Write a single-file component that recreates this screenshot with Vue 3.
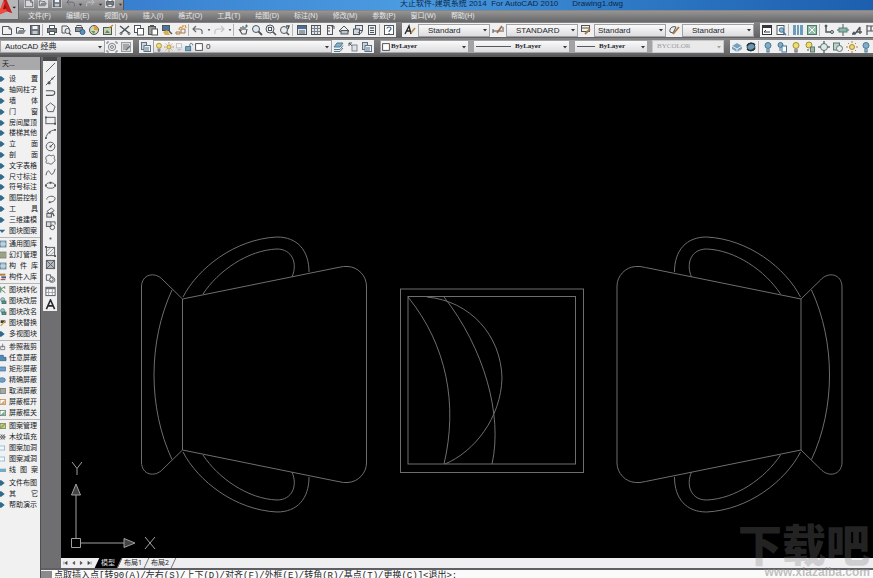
<script setup>
import { ref } from 'vue'

const D = '#50555c'
const B = '#3f7596'
const s = (d, c = D, w = 1) => `<path d="${d}" fill="none" stroke="${c}" stroke-width="${w}"/>`
const f = (d, c = D) => `<path d="${d}" fill="${c}"/>`
const box = (x, y, w, h, fill = 'none', c = D) =>
  `<rect x="${x}" y="${y}" width="${w}" height="${h}" fill="${fill}" stroke="${c}" stroke-width="1"/>`
const dot = (x, y, r, fill = 'none', c = D) =>
  `<circle cx="${x}" cy="${y}" r="${r}" fill="${fill}" stroke="${c}" stroke-width="1"/>`

const icons = {
  new: s('M1.5 2.5H8L10.500 5V10.500H1.500Z') + s('M8 2.500V5H10.500'),
  open: s('M1.500 9.500V3.500H4L5 4.500H8.500V6') + f('M1.500 10L4 6H11L8.500 10Z', '#858a90'),
  save: box(1.5, 1.5, 9, 9, '#6d7681') + f('M3.500 2H8.500V5H3.500Z', '#f4f4f4') + f('M3.500 7H8.500V10H3.500Z', '#c3c9d0'),
  print: box(3.5, 1.5, 5, 3, '#fff') + box(1.5, 4.5, 9, 4, '#7a7f86') + box(3.5, 7.5, 5, 3, '#fff'),
  preview: s('M2 2H7L9 4V5M2 2V9H5') + dot(7.5, 7, 2.5, '#dfe9f2') + s('M9 9L11 11', D, 1.5),
  publish: box(1.5, 3.5, 7, 4, '#8c9299') + box(3, 1.5, 4, 2, '#fff') + dot(8.5, 8, 2.5, '#5d8fbd', '#3c6182'),
  globe: dot(6, 6, 4.5, '#cfd6b4') + f('M6 2V6H10A4 4 0 0 0 6 2Z', '#e29e35') + f('M3 7L6 10L7 7Z', '#5b9b58'),
  sheet: box(1.5, 3.5, 8, 7, '#c6d3b0') + f('M3 9L5 6L8 9Z', '#5b8d55') + s('M7 4L11 1', '#c78b2c', 1.5),
  cut: s('M1 2L10 9M10 2L2 9', D, 1.5) + dot(2, 9.5, 1) + dot(10, 9.5, 1),
  copy: box(1.5, 1.5, 6, 7, '#fff') + box(4.5, 4.5, 6, 6.5, '#fff'),
  paste: box(1.5, 2.5, 7, 8, '#9b9c96') + box(5, 5, 5.5, 6, '#fff') + f('M3 1H7V3H3Z'),
  match: box(1.5, 1.5, 7, 5, '#4e749d') + f('M2 8L6 6L9 11H4Z', '#d7ae49') + s('M8 7L11 10', D, 1.5),
  block: s('M1 8H5V10H1ZM6 5H10V9H6Z', '#a77b45') + s('M4 6C4 3 6 3 8 3M8 3V1M10 1L11 4', '#db8d2f', 1.2),
  undo: s('M4 2L1 5L4 8M1 5H7C10 5 10.500 7 10 10', '#666b72', 1.2),
  redo: s('M8 2L11 5L8 8M11 5H5C2 5 1.500 7 2 10', '#c3c3c5', 1.2),
  down: f('M2 4H10L6 9Z', '#34373b'),
  pan: s('M2 5L5 10H9L10 5M4 7V3M6 6V2M8 6V3', D, 1.2) + s('M8 2H11M9.500 0.500V3.500', B),
  zoom: dot(5, 5, 3.5, '#dfe8ef') + s('M7.500 7.500L11 11', D, 1.8),
  zoomwin: dot(5, 5, 4, '#dfe8ef') + box(3.5, 3.5, 3, 3, '#fff') + s('M8 8L11 11', D, 1.6),
  zoomprev: dot(5, 6, 3.5, '#e6ebef') + s('M7.500 8.500L10 11', D, 1.6) + s('M7 2H10L9 5', D, 1.4),
  props: box(1.5, 1.5, 9, 9, '#dfe7ef') + f('M2 2H10V5H2Z', '#4b6f9a') + s('M3 7H9M3 9H9'),
  grid: box(1.5, 1.5, 9, 9, '#e2e6ea') + s('M4.500 2V10M7.500 2V10M2 4.500H10M2 7.500H10', '#7a828b'),
  palette: box(3.5, 1.5, 5, 9, '#eee') + s('M3.500 4H6M3.500 7H6M7 2H10V5'),
  sheets: s('M1 7L6 2L11 7L6 9Z') + box(3, 6.5, 7, 3.5, '#bec4ca'),
  markup: box(3.5, 1.5, 7, 5, '#e3e6ea') + box(1.5, 5, 6, 5.5, '#cdd7df') + s('M6 8C7 10 10 10 10 7'),
  calc: box(2.5, 1.5, 7, 9, '#eef0f2') + f('M4 3H8V5H4Z', '#7c8792') + s('M4 6.500H8M4 8.500H8'),
  help: box(1.5, 1.5, 9, 9, '#fff') + s('M4 4.500C4 2.500 8 2.500 8 4.500C8 6 6 6 6 8M6 9V10', '#44628a', 1.2),
  astyle: s('M1 10L5 2L7 10M3 7H6', '#25282c', 1.4) + s('M7 9L11 4', '#b58849', 1.6),
  dim: s('M1 9V5M11 8V3M1 7H10') + s('M5 9L10 2', '#a76b41', 1.7),
  tstyle: box(1.5, 1.5, 8, 6, '#f6f2df') + s('M1.500 4H9.500') + s('M5 10L10 5', '#a77948', 1.8),
  ml: s('M2 8C1 3 6 2 8 3L5 9Z', D) + s('M5 10L11 3', '#a77948', 1.8),
  gear: dot(6, 6, 3.7, '#e3e5e7', '#888e95') + dot(6, 6, 1.4, '#fff', '#777d84') + s('M1 1V3M1 1H3M11 1H9M11 1V3M1 11V9M1 11H3M11 11H9M11 11V9', '#777d84'),
  work: box(1.5, 1.5, 9, 9, '#d6d8db', '#9a9ea3') + s('M3 4H9M3 6H8M3 8H6', '#777') + s('M6 9L10 5', '#666', 1.5),
  layer: f('M1 6L4 2H10L7 6Z', '#7fb2cf') + s('M1 6L4 2H10L7 6ZM1 8.500H7L10 4.500M1 10.500H7L10 7', '#52788f'),
  layers: box(1.5, 1.5, 5, 7, '#ccd5dd', '#5d7286') + box(4, 4.5, 6.5, 6, '#edf1f4', '#5d7286') + s('M5 7H9M5 9H9', '#5d7286'),
  bulb: dot(6, 4.5, 3, '#ecdf72', '#a18b32') + s('M5 8V11H7V8', '#667', 1.2),
  bluebulb: dot(6, 4.5, 3, '#82acc8', '#467895') + s('M5 8V11H7V8', '#467895', 1.2),
  sun: dot(6, 6, 2.5, '#f1da6b', '#aa8638') + s('M6 0V2M6 10V12M0 6H2M10 6H12M2 2L3 3M9 9L10 10M10 2L9 3M2 10L3 9', '#aa8638'),
  vp: box(3, 2, 6, 5, '#f5f5f5', '#b8bbc0') + s('M6 8V11M4 9H9', '#b8bbc0'),
  lock: box(2, 5.5, 6, 5, '#77a5bd', '#3e6b83') + s('M7 5V3C7 1 11 1 10.500 4', '#3e6b83'),
  square: box(2, 2, 8, 8, '#fff', '#34373b'),
  prev: s('M2 2L5 2M2 2V5M2 2L5 5') + box(5, 4, 5, 6, '#e0e3e7', '#7c8792'),
  cube: f('M1 5L6 2L11 5V8L6 11L1 8Z', '#79a1bf') + s('M1 5L6 8L11 5M6 8V11', '#e5edf3'),
  refresh: dot(6, 6, 4, '#6f95ae', '#3a5165') + s('M2 5C4 1 9 2 10 4M10 7C8 10 4 10 2 8', '#26313a', 1.5),
  bulbpage: dot(4.5, 4, 2.5, '#82acc8', B) + s('M4 7V10', B) + box(6, 5, 4.5, 6, '#fff', B),
  yellowpage: dot(5, 4, 3, '#ecdf72', '#a18b32') + s('M4 8V10', D) + box(6.5, 6, 4, 5, '#9bb9a0', '#5e7770'),
  sheetkey: box(1.5, 3, 9, 7.500, '#fff', '#33373c') + f('M1 1H11V4H1Z', '#33373c') + s('M3 8H9M3 8L5 6', '#33373c'),
  find: box(2, 1.5, 7, 9, '#fff') + dot(6.5, 6, 2.3, '#8eb5d2', B) + s('M8 8L11 11', B, 1.5),
  cols: f('M1 1H4V11H1ZM5 1H7V11H5ZM8 1H11V11H8Z', '#6c9db9'),
  green: box(1.5, 1.5, 9, 9, '#93bfa9', '#527a6b') + s('M3 3L9 9M9 3L3 9', '#fff'),
  elbow: s('M3 1V8H8', D, 1.4) + dot(9, 8, 1.5, '#ccc') + dot(3, 2, 1, D),
  align: s('M6 0V12M0 6H12') + box(2, 4, 8, 4, '#8eb7a7', '#538272'),
  leader: s('M1 10H4L9 3M9 3V10M6 8H11', D, 1.3) + dot(3, 9, 1, D),
  flag: s('M2 1V11M2 2H10V7H2M6 2V7', D, 1.2),
  wheel: dot(6, 6, 3.5, '#dfe9e4', '#5e7770') + s('M6 0V3M6 9V12M0 6H3M9 6H12', '#5e7770', 1.5),
  page: box(1.5, 2, 6, 7, '#bdd3ca', '#5e7770') + dot(7.500, 7.500, 3, '#e5edea', '#5e7770'),
  line: s('M1 11L11 1'),
  xline: s('M1 11L11 1') + f('M3 7H6V10H3ZM7 3H9V5H7Z'),
  pline: s('M1 3H8C12 3 11 8 8 8H3M1 8H3', D, 1.2),
  polygon: s('M6 1L11 5L9 10.500H3L1 5Z'),
  rect: box(1, 2.5, 10, 7) + f('M0 1.500H2V3.500H0ZM10 8.500H12V10.500H10Z'),
  arc: s('M1 11C2 6 5 3 11 2') + f('M0 10H2V12H0ZM4 4H6V6H4ZM10 1H12V3H10Z'),
  circle: dot(6, 6, 4.7) + s('M6 6L9 3') + f('M5 5H7V7H5Z'),
  cloud: s('M3 2C5 0 6 2 7 2C10 0 11 3 10 5C12 7 10 9 9 9C8 12 5 11 4 10C1 11 0 8 2 7C0 5 1 2 3 2Z'),
  spline: s('M1 9C3 1 5 5 6 7C8 10 10 6 11 2'),
  ellipse: '<ellipse cx="6" cy="6" rx="5" ry="3" fill="none" stroke="#50555c"/>' + f('M0 5H2V7H0ZM10 5H12V7H10ZM5 2H7V4H5Z'),
  earc: s('M2 6C1 2 11 1 11 5C11 8 7 9 5 9') + f('M4 8H6V10H4Z'),
  insert: s('M2 5L7 1L10 4L5 7Z') + box(2, 7, 5, 4, '#d7dadd') + s('M8 6L10 10', D, 1.5),
  make: box(1.500, 2, 5, 5, '#d7dadd') + dot(8, 8, 2.500) + s('M7 2H11V5'),
  point: f('M5 5H7V7H5Z'),
  hatch: box(1.500, 1.500, 9, 9) + s('M2 6L6 2M2 10L10 2M6 10L10 6', '#8a8d92') + f('M0 0H2V2H0ZM10 10H12V12H10Z'),
  gradient: box(1.500, 1.500, 9, 9, '#b5b8bc') + s('M2 2L10 10M10 2L2 10', '#5a5f66'),
  region: s('M1.500 2H6V4C10 4 11 6 10.500 9C8 11 5 10 4 8H1.500Z') + dot(7, 7, 2),
  table: box(1, 1.500, 10, 9, '#fff') + f('M1 1H11V3.500H1Z', '#6d7278') + s('M4 3V10M8 3V10M1 7H11', '#9a9da2'),
  atext: s('M1.500 11L6 1L10.500 11M3 7.500H9', '#26292d', 1.7),
  diamond: f('M-1 2H2L7 6L2 10H-1Z', '#316b8b'),
  tri: f('M-1 4H8L3 9Z', '#316b8b'),
  lib: box(0, 1.500, 9, 9, '#8fb1c6', '#456981') + s('M3 2V10M6 2V10M0 6H9', '#e8eef2'),
  slide: box(0, 1.500, 9, 9, '#b5bda1', '#676d59') + s('M3 2V10M6 2V10', '#676d59'),
  in: f('M0 1H8V4H0Z', '#b58043') + f('M2 5H9V8H2Z', '#4c5c87') + s('M1 10H8', '#973b3b', 1.5),
  conv: s('M1 1V10M1 5L7 1M1 5L8 10M7 1V4', '#50856a', 1.4),
  colr: dot(4, 4, 3, '#9fc5cb', '#3b7881') + box(3, 6, 6, 4, '#5d9488', '#346459'),
  swap: f('M1 2H8V6H1Z', '#36383b') + s('M1 10L8 3', '#d0a33c', 2),
  hand: s('M1 5V10H7V5ZM4 7V1', D),
  blueL: f('M0 2H5V5H9V10H0Z', '#548bb4') + s('M0 2H5V5H9V10H0', '#2e5b7e'),
  blueR: box(-1, 3, 9, 6, '#6da1ca', '#3a6f98'),
  blueE: '<ellipse cx="3" cy="6" rx="5" ry="3.500" fill="#6da1ca" stroke="#3a6f98"/>',
  gray: box(0, 2, 8, 8, '#a3aaa2', '#686e67'),
  orange: box(0, 2, 8, 8, '#fff', '#b27336') + f('M1 9L7 3V9Z', '#d9a468'),
  greenbox: box(0, 2, 8, 8, '#fff', '#3d6b55') + f('M1 9L7 3V9Z', '#7ba58e'),
  pattern: box(0, 2, 8, 8, '#b3d29c', '#567b46') + s('M1 9L8 2', '#b8912c', 1.7),
  wood: s('M1 2L7 10M7 2L1 10M0 6H9') + dot(4, 6, 3),
  hole: box(-1, 3, 8, 6, '#eef7fb', '#76adc9'),
  band: f('M-1 4H9V9H-1Z', '#72abc3'),
}

const menus = ['文件(F)', '编辑(E)', '视图(V)', '插入(I)', '格式(O)', '工具(T)', '绘图(D)', '标注(N)', '修改(M)', '参数(P)', '窗口(W)', '帮助(H)']
const quick = ['new', 'open', 'save', 'undo', 'down', 'redo', 'down', 'print', 'down']
const standard = [
  ['new', 'open', 'save'],
  ['print', 'preview', 'publish', 'globe', 'sheet'],
  ['cut', 'copy', 'paste', 'match', 'block'],
  ['undo', 'down', 'redo', 'down'],
  ['pan', 'zoom', 'zoomwin', 'zoomprev'],
  ['props', 'grid', 'palette', 'sheets', 'markup', 'calc'],
  ['help'],
]
const styles = [
  { icon: 'astyle', value: 'Standard', name: 'Text style' },
  { icon: 'dim', value: 'STANDARD', name: 'Dimension style' },
  { icon: 'tstyle', value: 'Standard', name: 'Table style', tight: true },
  { icon: 'ml', value: 'Standard', name: 'Multileader style' },
]
const extra = [['sheetkey', 'find'], ['cols', 'green'], ['elbow', 'align', 'leader', 'flag']]
const layerTools = [['cube', 'refresh'], ['bluebulb', 'bulbpage', 'bulb', 'yellowpage', 'wheel', 'page', 'sun', 'bluebulb', 'lock']]
const drawTools = ['line', 'xline', 'pline', 'polygon', 'rect', 'arc', 'circle', 'cloud', 'spline', 'ellipse', 'earc', 'insert', 'make', 'point', 'hatch', 'gradient', 'region', 'table', 'atext']
const scrollers = ['M2 2V10M10 2L4 6L10 10Z', 'M9 2L4 6L9 10Z', 'M3 2L8 6L3 10Z', 'M2 2L8 6L2 10ZM10 2V10']

const groups = [
  ['设 置', '轴网柱子', '墙 体', '门 窗', '房间屋顶', '楼梯其他', '立 面', '剖 面', '文字表格', '尺寸标注', '符号标注', '图层控制', '工 具', '三维建模'].map(t => ['diamond', t]).concat([['tri', '图块图案']]),
  [['lib', '通用图库'], ['slide', '幻灯管理'], ['lib', '构 件 库'], ['in', '构件入库']],
  [['conv', '图块转化'], ['colr', '图块改层'], ['colr', '图块改名'], ['swap', '图块替换'], ['diamond', '多视图块']],
  [['hand', '参照裁剪'], ['blueL', '任意屏蔽'], ['blueR', '矩形屏蔽'], ['blueE', '精确屏蔽'], ['gray', '取消屏蔽'], ['orange', '屏蔽框开'], ['greenbox', '屏蔽框关']],
  [['pattern', '图案管理'], ['wood', '木纹填充'], ['hole', '图案加洞'], ['hole', '图案减洞'], ['band', '线 图 案']],
  [['diamond', '文件布图'], ['diamond', '其 它'], ['diamond', '帮助演示']],
]
const groupHeight = g => Math.round(g.length * 10.8) + 'px'
const command = ref('点取插入点[转90(A)/左右(S)/上下(D)/对齐(F)/外框(E)/转角(R)/基点(T)/更换(C)]<退出>:')
</script>

<template>
  <div class="app">
    <header class="top">
      <button class="logo" aria-label="Application menu">
        <svg viewBox="0 0 19 20">
          <path d="M-2 16L4 0H7L13 14L7 12Z" fill="#c91e1e" />
          <path d="M4 0L7 12L-2 16Z" fill="#ef4b3e" />
          <path d="M5 4L7 9L3 10Z" fill="#8d1014" />
          <path d="M13 7H17L15 9Z" fill="#222" />
        </svg>
      </button>
      <div class="bars">
        <div class="title">
          <div class="quick">
            <button v-for="(q, i) in quick" :key="i" :class="q" :aria-label="q"><svg viewBox="0 0 12 12" v-html="icons[q]" /></button>
          </div>
          <div class="caption"><span>天正软件-建筑系统 2014&nbsp; For AutoCAD 2010</span><span>Drawing1.dwg</span></div>
        </div>
        <nav class="menu"><button v-for="m in menus" :key="m">{{ m }}</button></nav>
      </div>
    </header>

    <div class="row">
      <div class="panel">
        <div v-for="(g, i) in standard" :key="i" class="set">
          <button v-for="(n, j) in g" :key="j" class="tool" :class="{ slim: n === 'down' }" :aria-label="n"><svg viewBox="0 0 12 12" v-html="icons[n]" /></button>
        </div>
      </div>
      <div class="panel">
        <template v-for="c in styles" :key="c.name">
          <button class="tool style-tool" :aria-label="c.name"><svg viewBox="0 0 12 12" v-html="icons[c.icon]" /></button>
          <div class="combo style" :class="{ tight: c.tight }">
            <select :aria-label="c.name"><option>{{ c.value }}</option></select>
            <svg class="arrow" viewBox="0 0 12 12" v-html="icons.down" />
          </div>
        </template>
      </div>
      <div class="panel rest">
        <div v-for="(g, i) in extra" :key="i" class="set">
          <button v-for="n in g" :key="n" class="tool" :aria-label="n"><svg viewBox="0 0 12 12" v-html="icons[n]" /></button>
        </div>
      </div>
    </div>

    <div class="row second">
      <div class="panel">
        <div class="combo workspace">
          <select aria-label="Workspace"><option>AutoCAD 经典</option></select>
          <svg class="arrow" viewBox="0 0 12 12" v-html="icons.down" />
        </div>
        <button class="tool" aria-label="Workspace settings"><svg viewBox="0 0 12 12" v-html="icons.gear" /></button>
        <button class="tool" aria-label="My workspace"><svg viewBox="0 0 12 12" v-html="icons.work" /></button>
      </div>
      <div class="panel">
        <button class="tool" aria-label="Layer properties"><svg viewBox="0 0 12 12" v-html="icons.layers" /></button>
        <div class="combo layer">
          <svg v-for="n in ['bulb', 'sun', 'vp', 'lock', 'square']" :key="n" class="state" viewBox="0 0 12 12" v-html="icons[n]" />
          <select aria-label="Layer"><option>0</option></select>
          <svg class="arrow" viewBox="0 0 12 12" v-html="icons.down" />
        </div>
        <button v-for="n in ['layer', 'prev', 'layers']" :key="n" class="tool" :aria-label="n"><svg viewBox="0 0 12 12" v-html="icons[n]" /></button>
      </div>
      <div class="panel spaced">
        <div class="combo serif color">
          <svg class="state" viewBox="0 0 12 12" v-html="icons.square" />
          <select aria-label="Color"><option>ByLayer</option></select>
          <svg class="arrow" viewBox="0 0 12 12" v-html="icons.down" />
        </div>
        <div class="combo serif linetype">
          <i class="rule" />
          <select aria-label="Linetype"><option>ByLayer</option></select>
          <svg class="arrow" viewBox="0 0 12 12" v-html="icons.down" />
        </div>
        <div class="combo serif weight">
          <i class="rule" />
          <select aria-label="Lineweight"><option>ByLayer</option></select>
          <svg class="arrow" viewBox="0 0 12 12" v-html="icons.down" />
        </div>
        <div class="combo serif plot">
          <select aria-label="Plot style" disabled><option>BYCOLOR</option></select>
          <svg class="arrow" viewBox="0 0 12 12" v-html="icons.down" />
        </div>
      </div>
      <div class="panel rest">
        <div v-for="(g, i) in layerTools" :key="i" class="set">
          <button v-for="(n, j) in g" :key="j" class="tool" :aria-label="n"><svg viewBox="0 0 12 12" v-html="icons[n]" /></button>
        </div>
      </div>
    </div>

    <main class="work">
      <aside class="palette">
        <h2>天...</h2>
        <ul v-for="(g, i) in groups" :key="i" :style="{ height: groupHeight(g) }">
          <li v-for="item in g" :key="item[1]">
            <svg viewBox="0 0 12 12" v-html="icons[item[0]]" />
            <button :class="{ spread: item[1].includes(' ') }">{{ item[1] }}</button>
          </li>
        </ul>
      </aside>
      <div class="side">
        <div class="upper">
          <div class="dock">
            <div class="draw">
              <button v-for="n in drawTools" :key="n" :aria-label="n"><svg viewBox="0 0 12 12" v-html="icons[n]" /></button>
            </div>
          </div>
          <div class="view">
            <svg class="canvas" viewBox="61 57 812 501">
              <defs>
                <g id="handle">
                  <path d="M183 297C198 268 235 239 277 237C297 237 309 250 309 272" />
                  <path d="M203 294C218 271 248 250 277 249C292 249 298 263 292 277" />
                </g>
                <g id="cup">
                  <path d="M182.500 299L338 267.500Q344 266 348 266.500A20 20 0 0 1 366.500 286V463A20 20 0 0 1 348 482.500Q344 483 338 481.500L182.500 450Z" />
                  <path d="M182.500 299L163 280C155 271 141.500 274 141.500 287V462C141.500 475 155 478 163 469L182.500 450" />
                  <path d="M172 290C148 342 148 408 172 459.500" />
                  <use href="#handle" />
                  <use href="#handle" transform="translate(0 749) scale(1 -1)" />
                </g>
              </defs>
              <g class="ink">
                <use href="#cup" />
                <use href="#cup" transform="translate(983.500 0) scale(-1 1)" />
                <rect x="400.500" y="289" width="183" height="183.500" />
                <rect x="408" y="296.500" width="167.500" height="167.500" />
                <path d="M408 297C447 345 458 405 444 464" />
                <path d="M444 297C484 348 503 415 492 464" />
                <path d="M427 297C470 301 501 335 502 378C501 418 474 452 445 464" />
              </g>
              <g class="ucs">
                <path d="M71.500 538.500H80.500V547.500H71.500ZM76 538V495M81 543H124" />
                <path class="tip" d="M71.500 495L76 484L80.500 495ZM124 538.500L135 543L124 547.500Z" />
                <path d="M72 462L77 468.500L82 462M77 468.500V475M145 537L155 549M155 537L145 549" />
              </g>
            </svg>
            <div class="tabs">
              <button v-for="n in scrollers" :key="n" class="nav" aria-label="Scroll tabs">
                <svg viewBox="0 0 12 12"><path :d="n" fill="#444" stroke="#444" /></svg>
              </button>
              <button class="tab on">模型</button>
              <button class="tab">布局1</button>
              <button class="tab">布局2</button>
            </div>
          </div>
        </div>
        <div class="command">
          <span class="grip" />
          <input v-model="command" aria-label="Command line" />
        </div>
      </div>
    </main>
    <div class="mark"><b>下载吧</b><span>www.xiazaiba.com</span></div>
  </div>
</template>

<style>
body { margin: 0; overflow: hidden; }
</style>

<style scoped>
.app {
  position: relative;
  display: flex;
  flex-direction: column;
  height: 100vh;
  overflow: hidden;
  background: #6f6e71;
  color: #25272a;
  font: 7px/10px "Noto Sans", "Noto Sans CJK SC", sans-serif;
}
button, select, input { margin: 0; padding: 0; border: 0; background: none; color: inherit; font: inherit; }
svg { display: block; }
.top { display: flex; flex: none; height: 22px; background: linear-gradient(#777 0 10px, #959595 11px, #676769); }
.logo { flex: none; width: 19px; height: 20px; background: #b7b7b9; border-right: 1px solid #666; border-bottom: 1px solid #666; }
.bars { flex: 1; min-width: 0; }
.title { display: flex; height: 10px; background: linear-gradient(90deg, #3175c9, #4b9be0 45%, #2d78c4 72%, #1d5fae); }
.quick { display: flex; align-items: flex-start; flex: none; width: 105px; padding-left: 3px; box-sizing: border-box; background: linear-gradient(#a3a3a5, #818183); border-right: 1px solid #555; }
.quick button { width: 14px; height: 8px; overflow: hidden; }
.quick svg { width: 10px; height: 10px; margin: -3px auto 0; }
.quick .new svg, .quick .open svg, .quick .save svg, .quick .print svg { background: #d8d8da; }
.quick .down { width: 6px; }
.quick .down svg { width: 5px; height: 5px; margin: 0 auto; }
.caption { display: flex; flex: 1; gap: 14px; padding-left: 276px; color: #0c2748; font: 8px/7px "Liberation Sans", "Noto Sans CJK SC", sans-serif; white-space: pre; }
.menu { display: flex; gap: 15px; padding-left: 9px; height: 12px; color: #e8e8e8; }
.menu button { line-height: 12px; white-space: nowrap; font-family: "Liberation Sans", "Noto Sans CJK SC", sans-serif; }

.row { display: flex; flex: none; align-items: center; gap: 6px; height: 16px; overflow: hidden; background: linear-gradient(#858587, #626264); }
.second { height: 17px; }
.panel { display: flex; flex: none; align-items: center; height: 14px; background: #f0f0f1; }
.second .panel { height: 13px; }
.rest { flex: 1 0 auto; }
.set { display: flex; align-items: center; }
.set + .set { border-left: 1px solid #b4b4b6; padding-left: 2px; }
.tool { width: 14px; height: 12px; }
.tool svg { width: 12px; height: 12px; margin: 0 auto; }
.tool.slim { width: 7px; }
.tool.slim svg { width: 4px; height: 4px; }
.style-tool { width: 16px; }
.combo { display: flex; align-items: center; box-sizing: border-box; height: 13px; padding-right: 1px; border: 1px solid #a2a2a5; background: linear-gradient(#fafafa, #dddde0); }
.combo select { flex: 1; min-width: 0; height: 11px; appearance: none; font: 8px/11px "Liberation Sans", "Noto Sans CJK SC", sans-serif; }
.arrow { flex: none; width: 6px; height: 6px; }
.style { width: 72px; padding-left: 9px; }
.tight { padding-left: 3px; }
.workspace { width: 105px; padding-left: 4px; }
.layer { width: 179px; }
.state { flex: none; width: 10px; height: 10px; }
.layer select { padding-left: 2px; }
.combo.serif select { font: bold 7px/11px "Liberation Serif", serif; }
.spaced { gap: 4px; background: #a3a3a5; }
.color { width: 89px; }
.linetype { width: 97px; }
.weight { width: 74px; }
.rule { flex: none; width: 35px; height: 1px; margin: 0 4px 0 2px; background: #55585c; }
.weight .rule { width: 18px; }
.plot { width: 72px; padding-left: 4px; border-color: #c8c8ca; background: #e9e9ea; }
.combo.plot select { color: #9b9b9e; opacity: 1; font-weight: normal; }
.plot .arrow { opacity: 0.4; }

.work { display: flex; flex: 1; min-height: 0; border-top: 2px solid #59595b; }
.palette { display: flex; flex: none; flex-direction: column; width: 40px; overflow: hidden; background: #f1f1f2; border-right: 1px solid #505052; }
.palette h2 { margin: 0 0 4px; padding-left: 2px; height: 13px; background: #a9a9ab; font: 7px/14px "Noto Sans", "Noto Sans CJK SC", sans-serif; }
.palette ul { display: grid; flex: none; grid-auto-rows: 1fr; margin: 0; padding: 0; list-style: none; }
.palette ul + ul { margin-top: 1px; border-top: 1px solid #b5b5b8; padding-top: 1px; }
.palette ul:last-child { border-color: transparent; }
.palette li { display: flex; align-items: center; gap: 1px; min-height: 0; }
.palette li svg { flex: none; width: 8px; height: 10px; }
.palette li button { width: 29px; height: 10px; line-height: 10px; text-align: left; white-space: nowrap; color: #17191c; }
.palette li .spread { text-align-last: justify; }

.side { display: flex; flex: 1; flex-direction: column; min-width: 0; }
.upper { display: flex; flex: 1; min-height: 0; }
.dock { flex: none; width: 20px; box-sizing: border-box; padding-left: 2px; }
.draw { display: grid; grid-auto-rows: 1fr; width: 14px; height: 250px; border-top: 4px solid #4a4a4e; background: #f0f0f1; }
.draw button { display: grid; place-items: center; }
.draw svg { width: 11px; height: 11px; }
.view { display: flex; flex: 1; flex-direction: column; min-width: 0; background: #000; }
.canvas { flex: 1; width: 100%; min-height: 0; }
.ink { fill: none; stroke: #6e6e6e; stroke-width: 1; }
.ucs { fill: none; stroke: #a0a0a0; stroke-width: 1; }
.tip { fill: #444; }
.tabs { display: flex; flex: none; height: 10px; background: #efeff1; }
.nav { width: 8px; }
.nav svg { width: 5px; height: 6px; margin: 0 auto; }
.tab { position: relative; z-index: 0; padding: 0 5px 0 4px; height: 10px; line-height: 10px; }
.tab::before { content: ""; position: absolute; inset: 0; z-index: -1; border-right: 1px solid #777; transform: skewX(-25deg); }
.on { margin-left: 4px; color: #ddd; }
.on::before { background: #000; }
.command { display: flex; flex: none; height: 8px; overflow: hidden; border-top: 2px solid #606064; background: #fafafa; }
.grip { flex: none; width: 11px; background: #8b8b8e; border-top: 1px solid #eee; box-sizing: border-box; }
.command input { flex: 1; height: 12px; padding-left: 2px; font: 9px/12px "Liberation Mono", "Noto Sans CJK SC", monospace; }

.mark { position: absolute; right: 3px; bottom: 0; display: flex; flex-direction: column; align-items: flex-end; color: rgba(125, 125, 125, 0.3); pointer-events: none; }
.mark b { font: 900 44px/46px "Noto Sans CJK SC", sans-serif; }
.mark span { font: bold 12px/12px "Liberation Sans", sans-serif; color: rgba(150, 150, 150, 0.6); }
</style>
